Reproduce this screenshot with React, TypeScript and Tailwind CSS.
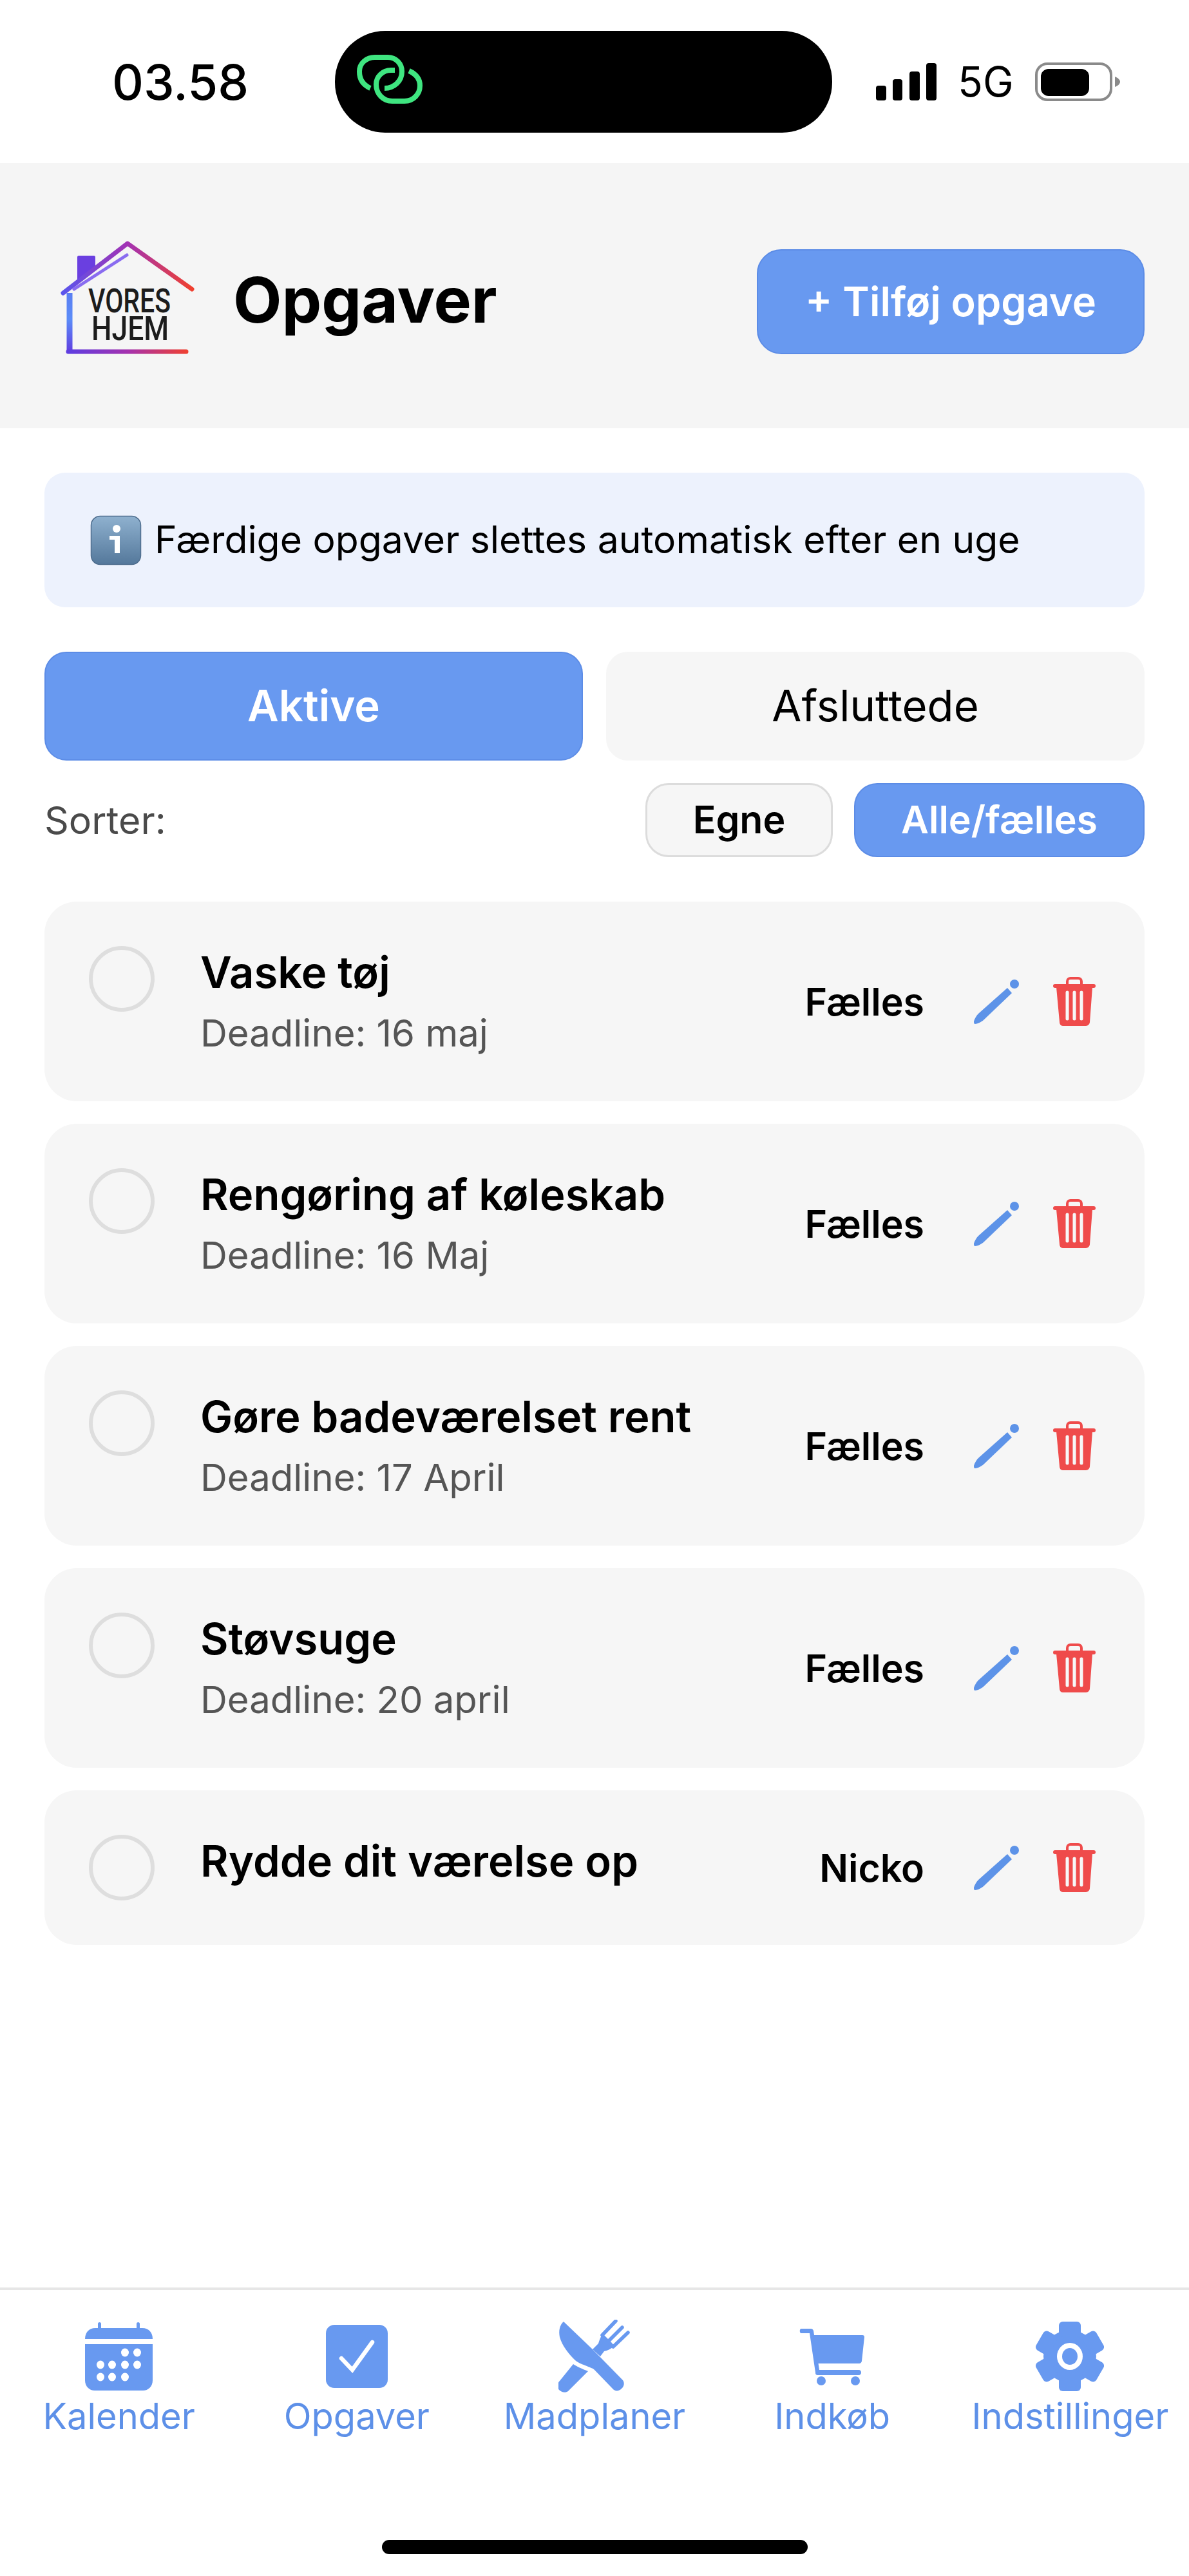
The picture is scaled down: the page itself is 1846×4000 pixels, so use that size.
import React from "react";

const BLUE = "#6899f0";

function LinkIcon() {
  return (
    <svg width="130" height="100" viewBox="0 0 130 100" fill="none" stroke="#3fe580" strokeWidth="8" strokeLinecap="butt">
      <path d="M35 60C24 55 18 46 18 34C18 21 29 12 42 12L62 12C75 12 84 22 84 34C84 49 72 60 57 60" />
      <path d="M73 32L67 32C54 32 44 42 44 54C44 69 55 80 69 80L88 80C102 80 112 69 112 56C112 46 106 38 95 33" />
    </svg>
  );
}

function Signal() {
  return (
    <svg width="94" height="58" viewBox="0 0 94 58" fill="#000">
      <rect x="0" y="35" width="16" height="23" rx="4" />
      <rect x="26" y="25" width="15" height="33" rx="4" />
      <rect x="52" y="13" width="16" height="45" rx="4" />
      <rect x="78" y="0" width="16" height="58" rx="4" />
    </svg>
  );
}

function Battery() {
  return (
    <svg width="132" height="60" viewBox="0 0 132 60" fill="none">
      <rect x="2" y="2" width="116" height="56" rx="17" stroke="#8a8a8a" strokeWidth="4" />
      <rect x="9" y="10" width="75" height="42" rx="12" fill="#000" />
      <path d="M124 22C129 24 132 27 132 30C132 33 129 36 124 38Z" fill="#8a8a8a" />
    </svg>
  );
}

function Logo() {
  return (
    <svg width="260" height="220" viewBox="0 0 260 220" fill="none" className="shrink-0">
      <defs>
        <linearGradient id="roof" gradientUnits="userSpaceOnUse" x1="37" y1="100" x2="238" y2="100">
          <stop offset="0" stopColor="#5a55ec" />
          <stop offset="0.5" stopColor="#a232b4" />
          <stop offset="1" stopColor="#f0402f" />
        </linearGradient>
        <linearGradient id="wall" gradientUnits="userSpaceOnUse" x1="48" y1="105" x2="48" y2="198">
          <stop offset="0" stopColor="#5a7ef2" />
          <stop offset="0.45" stopColor="#5b8cf8" />
          <stop offset="1" stopColor="#5f3de0" />
        </linearGradient>
        <linearGradient id="floor" gradientUnits="userSpaceOnUse" x1="48" y1="198" x2="230" y2="198">
          <stop offset="0" stopColor="#5f3de0" />
          <stop offset="0.5" stopColor="#a532ae" />
          <stop offset="1" stopColor="#ee4033" />
        </linearGradient>
      </defs>
      <path d="M60 50C60 49 61 48 62 48L86 48C87 48 88 49 88 50L88 66L60 88Z" fill="#6a3fe0" />
      <path d="M38 106L138 29L238 100" stroke="url(#roof)" strokeWidth="7" strokeLinecap="round" strokeLinejoin="round" />
      <path d="M55 100L137 47" stroke="#8a6cf0" strokeWidth="5" strokeLinecap="round" />
      <path d="M48 106L48 198" stroke="url(#wall)" strokeWidth="9" />
      <path d="M46 197L229 197" stroke="url(#floor)" strokeWidth="7" strokeLinecap="round" />
      <text x="77" y="136" fontFamily="Roboto, sans-serif" fontWeight="500" fontSize="52" fill="#1c1c1c" textLength="128" lengthAdjust="spacingAndGlyphs">VORES</text>
      <text x="82" y="179" fontFamily="Roboto, sans-serif" fontWeight="500" fontSize="52" fill="#1c1c1c" textLength="120" lengthAdjust="spacingAndGlyphs">HJEM</text>
    </svg>
  );
}

function InfoEmoji() {
  return (
    <svg width="80" height="78" viewBox="0 0 80 78" className="shrink-0">
      <defs>
        <linearGradient id="inf" x1="0" y1="0" x2="0" y2="1">
          <stop offset="0" stopColor="#8fb1cf" />
          <stop offset="1" stopColor="#54789b" />
        </linearGradient>
      </defs>
      <rect x="1.5" y="1.5" width="77" height="75" rx="14" fill="url(#inf)" stroke="#4f6e8e" strokeWidth="1.5" />
      <circle cx="41" cy="21" r="6" fill="#fff" />
      <path d="M30 32L46 32L46 59L38 59L38 38L30 38Z" fill="#fff" />
    </svg>
  );
}

function Pencil() {
  return (
    <svg width="72" height="72" viewBox="0 0 72 72" fill="#5d93e8" className="shrink-0">
      <path d="M53 15L60 23L17 64C13 68 7 71 3 71C1 71 1 69 1 67C2 63 5 58 8 55Z" />
      <circle cx="64" cy="9" r="7" />
    </svg>
  );
}

function Trash() {
  return (
    <svg width="66" height="76" viewBox="0 0 66 76" fill="none" className="shrink-0">
      <path d="M22 13L22 7C22 4 24 2 27 2L39 2C42 2 44 4 44 7L44 13" stroke="#ef4b4b" strokeWidth="4" />
      <rect x="0" y="11" width="66" height="6" rx="3" fill="#ef4b4b" />
      <path d="M5 16L61 16L57 70C57 73 54 76 51 76L15 76C12 76 10 73 10 70Z" fill="#ef4b4b" />
      <path d="M22 24L22 65M33 24L33 65M44 24L44 65" stroke="#f7f7f7" strokeWidth="5" strokeLinecap="round" />
    </svg>
  );
}

function CalendarIcon() {
  const dots: [number, number][] = [
    [62, 47], [81, 47],
    [24, 66], [42, 66], [62, 66], [81, 66],
    [24, 85], [42, 85], [62, 85],
  ];
  return (
    <svg width="105" height="106" viewBox="0 0 105 106">
      <rect x="20" y="0" width="5" height="14" rx="2.5" fill={BLUE} />
      <rect x="80" y="0" width="5" height="14" rx="2.5" fill={BLUE} />
      <path d="M0 26C0 16 6 9 16 9L89 9C99 9 105 16 105 26L105 26L105 26L0 26Z" fill={BLUE} />
      <path d="M0 34L105 34L105 90C105 100 98 106 90 106L15 106C7 106 0 100 0 90Z" fill={BLUE} />
      {dots.map(([x, y], i) => (
        <ellipse key={i} cx={x} cy={y} rx="6" ry="6.5" fill="#fff" />
      ))}
    </svg>
  );
}

function CheckIcon() {
  return (
    <svg width="96" height="98" viewBox="0 0 96 98">
      <rect x="0" y="0" width="96" height="98" rx="13" fill={BLUE} />
      <path d="M24 52L41 70L72 27" fill="none" stroke="#fff" strokeWidth="6.5" strokeLinecap="round" strokeLinejoin="miter" />
    </svg>
  );
}

function CutleryIcon() {
  return (
    <svg width="112" height="114" viewBox="28 13 112 114" fill={BLUE}>
      <path d="M36 16L81 59L128 107C131 111 130 117 126 120C122 124 116 125 112 120L85 92C82 88 78 88 72 85C65 82 60 81 54 76C44 66 34 54 30 40C28 30 30 21 36 16Z" />
      <path d="M51 82C57 86 64 89 74 93L43 124C39 127 33 126 29 122C26 118 26 112 30 108Z" />
      <path d="M81 59L90 50C92 44 94 38 97 35L103 41L110 48L115 54C110 58 104 61 99 62L93 70Z" />
      <path d="M117 15L96 37M127 25L105 47M136 33L113 55" stroke={BLUE} strokeWidth="5.5" strokeLinecap="round" fill="none" />
    </svg>
  );
}

function CartIcon() {
  return (
    <svg width="102" height="90" viewBox="0 0 102 90" fill={BLUE}>
      <path d="M3 2L18 2C20 2 21 3 22 5L31 66L92 66C95 66 96 68 96 70C96 72 95 74 92 74L29 74C26 74 25 73 25 70L16 9L3 9C0 9 0 2 3 2Z" />
      <path d="M22 12L98 12C100 12 101 13 101 15L97 52C97 54 95 56 93 56L28 56Z" />
      <circle cx="34" cy="83" r="7" />
      <circle cx="87" cy="83" r="7" />
    </svg>
  );
}

function GearIcon() {
  const angles = [0, 60, 120, 180, 240, 300];
  return (
    <svg width="106" height="108" viewBox="-53 -54 106 108" fill={BLUE}>
      <circle cx="0" cy="0" r="41" />
      {angles.map((a) => (
        <rect key={a} x="-17" y="-54" width="34" height="24" rx="6" transform={`rotate(${a})`} />
      ))}
      <ellipse cx="0" cy="0" rx="20" ry="21" fill="#fff" />
      <ellipse cx="0" cy="0" rx="12" ry="13" fill={BLUE} />
    </svg>
  );
}

const tasks = [
  { title: "Vaske tøj", deadline: "Deadline: 16 maj", who: "Fælles" },
  { title: "Rengøring af køleskab", deadline: "Deadline: 16 Maj", who: "Fælles" },
  { title: "Gøre badeværelset rent", deadline: "Deadline: 17 April", who: "Fælles" },
  { title: "Støvsuge", deadline: "Deadline: 20 april", who: "Fælles" },
  { title: "Rydde dit værelse op", deadline: "", who: "Nicko" },
];

const nav = [
  { label: "Kalender", icon: <CalendarIcon /> },
  { label: "Opgaver", icon: <CheckIcon /> },
  { label: "Madplaner", icon: <CutleryIcon /> },
  { label: "Indkøb", icon: <CartIcon /> },
  { label: "Indstillinger", icon: <GearIcon /> },
];

export default function App() {
  return (
    <div className="flex h-[4000px] w-[1846px] flex-col overflow-hidden bg-white font-['Inter',sans-serif] text-black">
      {/* status bar */}
      <div className="flex h-[253px] shrink-0 items-center">
        <span className="ml-[174px] w-[346px] text-[76px] leading-none font-medium">03.58</span>
        <div className="flex h-[158px] w-[772px] items-center rounded-[78px] bg-black pl-[20px]">
          <LinkIcon />
        </div>
        <div className="ml-[68px]"><Signal /></div>
        <span className="ml-[33px] text-[64px] leading-none font-normal">5G</span>
        <div className="ml-[33px]"><Battery /></div>
      </div>

      {/* header */}
      <div className="flex h-[412px] shrink-0 items-center bg-[#f5f5f5] pl-[60px] pr-[69px]">
        <Logo />
        <h1 className="mt-[14px] ml-[42px] text-[98px] leading-none font-bold">Opgaver</h1>
        <button className="mt-[18px] ml-auto flex h-[163px] w-[602px] items-center justify-center rounded-[38px] border-[2px] border-[#5c8ce6] bg-[#6899f0] text-[63px] font-semibold text-white">
          + Tilføj opgave
        </button>
      </div>

      {/* content */}
      <div className="flex flex-col pt-[69px] pr-[69px] pl-[69px]">
        <div className="flex h-[209px] items-center gap-[20px] rounded-[32px] bg-[#edf2fd] pl-[71px]">
          <InfoEmoji />
          <span className="text-[58.8px] leading-none">Færdige opgaver slettes automatisk efter en uge</span>
        </div>

        <div className="mt-[69px] grid grid-cols-2 gap-[36px]">
          <button className="h-[169px] rounded-[34px] border-[2px] border-[#5c8ce6] bg-[#6899f0] text-[67px] font-semibold text-white">Aktive</button>
          <button className="h-[169px] rounded-[34px] bg-[#f6f6f6] text-[67px] font-normal">Afsluttede</button>
        </div>

        <div className="mt-[35px] flex h-[115px] items-center">
          <span className="text-[59px] leading-none text-[#4a4a4a]">Sorter:</span>
          <button className="ml-auto h-[115px] w-[291px] rounded-[36px] border-[3px] border-[#dcdcdc] bg-[#f6f6f6] text-[59px] font-semibold">Egne</button>
          <button className="ml-[33px] h-[115px] w-[451px] rounded-[36px] border-[2px] border-[#5c8ce6] bg-[#6899f0] text-[59px] font-semibold text-white">Alle/fælles</button>
        </div>

        <div className="mt-[69px] flex flex-col gap-[35px]">
          {tasks.map((t) => (
            <div
              key={t.title}
              className={`flex items-center rounded-[50px] bg-[#f6f6f6] pr-[76px] pl-[69px] ${t.deadline ? "h-[310px]" : "h-[240px]"}`}
            >
              <div className="mt-[69px] h-[102px] w-[102px] shrink-0 self-start rounded-full border-[6px] border-[#dedede] bg-transparent" />
              <div className="mt-[69px] ml-[71px] flex flex-col self-start">
                <span className="text-[67px] leading-[82px] font-semibold">{t.title}</span>
                {t.deadline && <span className="mt-[18px] text-[58px] leading-[70px] text-[#555555]">{t.deadline}</span>}
              </div>
              <span className="ml-auto text-[59px] leading-none font-semibold">{t.who}</span>
              <div className="ml-[76px] flex items-center gap-[52px]">
                <Pencil />
                <Trash />
              </div>
            </div>
          ))}
        </div>
      </div>

      {/* bottom nav */}
      <div className="mt-auto shrink-0 border-t-[4px] border-[#e6e6e6] pt-[44px]">
        <div className="grid grid-cols-5">
          {nav.map((n) => (
            <div key={n.label} className="flex flex-col items-center">
              <div className="flex h-[118px] items-center justify-center">{n.icon}</div>
              <span className="mt-[4px] whitespace-nowrap text-[56px] leading-[60px] text-[#5d90e8]">{n.label}</span>
            </div>
          ))}
        </div>
        <div className="mx-auto mt-[162px] mb-[34px] h-[22px] w-[661px] rounded-full bg-black" />
      </div>
    </div>
  );
}
